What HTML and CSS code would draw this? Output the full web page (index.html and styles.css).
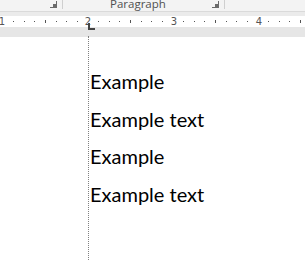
FILE: index.html
```html
<!DOCTYPE html>
<html>
<head>
<meta charset="utf-8">
<link rel="stylesheet" href="styles.css">
</head>
<body>
<div class="ribbon">
  <div class="group g1"><span class="launcher"></span></div>
  <div class="sep"></div>
  <div class="group g2"><span class="label">Paragraph</span><span class="launcher"></span></div>
  <div class="sep"></div>
</div>
<div class="band"></div>
<div class="ruler">
  <svg width="305" height="11" viewBox="0 0 305 11">
    <g fill="#555">
      <rect x="13" y="5" width="1" height="1"/>
      <rect x="24" y="5" width="1" height="1"/>
      <rect x="34" y="5" width="1" height="1"/>
      <rect x="45" y="4" width="1" height="3"/>
      <rect x="56" y="5" width="1" height="1"/>
      <rect x="66" y="5" width="1" height="1"/>
      <rect x="77" y="5" width="1" height="1"/>
      <rect x="98" y="5" width="1" height="1"/>
      <rect x="109" y="5" width="1" height="1"/>
      <rect x="119" y="5" width="1" height="1"/>
      <rect x="130" y="4" width="1" height="3"/>
      <rect x="141" y="5" width="1" height="1"/>
      <rect x="151" y="5" width="1" height="1"/>
      <rect x="162" y="5" width="1" height="1"/>
      <rect x="183" y="5" width="1" height="1"/>
      <rect x="194" y="5" width="1" height="1"/>
      <rect x="204" y="5" width="1" height="1"/>
      <rect x="215" y="4" width="1" height="3"/>
      <rect x="226" y="5" width="1" height="1"/>
      <rect x="236" y="5" width="1" height="1"/>
      <rect x="247" y="5" width="1" height="1"/>
      <rect x="268" y="5" width="1" height="1"/>
      <rect x="279" y="5" width="1" height="1"/>
      <rect x="289" y="5" width="1" height="1"/>
      <rect x="300" y="4" width="1" height="3"/>
    </g>
    <g class="num" fill="#555">
      <text x="2" y="9" text-anchor="middle">1</text>
      <text x="88" y="9" text-anchor="middle">2</text>
      <text x="174" y="9" text-anchor="middle">3</text>
      <text x="259" y="9" text-anchor="middle">4</text>
    </g>
  </svg>
</div>
<div class="band2"></div>
<div class="page">
  <div class="guide"></div>
  <div class="tab"></div>
  <div class="content">
    <p>Example</p>
    <p>Example text</p>
    <p>Example</p>
    <p>Example text</p>
  </div>
</div>
</body>
</html>
```
FILE: styles.css
```css
html, body { margin: 0; padding: 0; background: #fff; }
body { width: 305px; height: 260px; overflow: hidden; position: relative; font-family: "Liberation Sans", Arial, sans-serif; }

.ribbon {
  height: 11px;
  background: #f3f3f3;
  border-bottom: 1px solid #dadada;
  display: flex;
  align-items: stretch;
  overflow: hidden;
}
.group { display: flex; align-items: flex-start; position: relative; }
.g1 { width: 57px; justify-content: flex-end; padding-right: 5px; }
.g2 { width: 156px; padding-right: 5px; justify-content: flex-end; }
.label {
  position: absolute;
  left: 47px;
  top: -2px;
  font-family: "Open Sans", sans-serif;
  font-size: 11.5px;
  line-height: 12px;
  color: #505050;
}
.launcher {
  width: 6px; height: 6px;
  margin-top: 1px;
  border-right: 1px solid #6a6a6a;
  border-bottom: 1px solid #6a6a6a;
  position: relative;
}
.launcher::after {
  content: "";
  position: absolute;
  right: 0; bottom: 0;
  width: 3px; height: 3px;
  background: #6a6a6a;
}
.sep { width: 1px; background: #cfcfcf; height: 9px; }

.band { height: 4px; background: #ebebeb; }
.ruler { height: 11px; background: #fff; }
.ruler svg { display: block; }
.num text { font-family: "DejaVu Sans", sans-serif; font-size: 10px; }
.band2 { height: 10px; background: #e6e6e6; }

.page { position: relative; height: 223px; }
.guide {
  position: absolute;
  left: 88px; top: -1px; bottom: 0;
  border-left: 1px dotted #808080;
}
.tab {
  position: absolute;
  left: 88px; top: -14px;
  width: 5px; height: 5px;
  border-left: 2px solid #444;
  border-bottom: 2px solid #444;
}
.content { padding: 26px 0 0 90px; }
.content p {
  margin: 0;
  font-family: "Lato", "Liberation Sans", sans-serif;
  font-size: 20px;
  line-height: 37.5px;
  color: #000;
}
```
